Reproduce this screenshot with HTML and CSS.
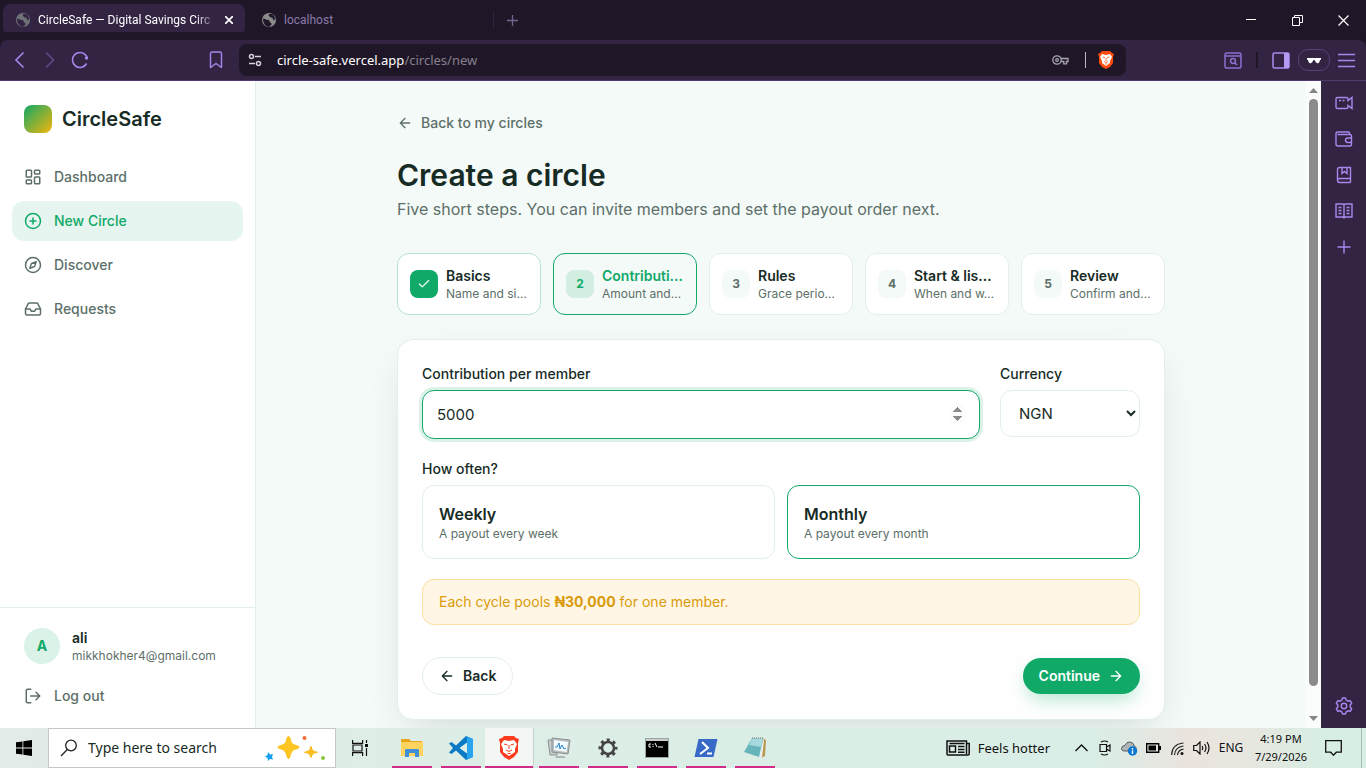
FILE: index.html
```html
<!DOCTYPE html>
<html lang="en">
<head>
    <meta charset="UTF-8">
    <meta name="viewport" content="width=device-width, initial-scale=1.0">
    <title>CircleSafe — Digital Savings Circles</title>
    <link rel="stylesheet" href="styles.css">
</head>
<body>
    <!-- Browser tabs -->
    <header class="tabs">
        <div class="tab active">
            <svg class="globe" width="14" height="14" viewBox="0 0 14 14"><circle cx="7" cy="7" r="7" fill="#6f7377"/><path d="M1 6c2-1 3 1 5 1s1 2 3 3-1 3-2 4C3 13 1 10 1 6zM7 1c-1 2 1 2 1 3s3 0 3 2 2 1 2 0-1-4-3-5z" fill="#332444"/></svg>
            <span class="tab-title">CircleSafe — Digital Savings Circ</span>
            <button class="tab-close" aria-label="Close tab"><svg width="8" height="8" viewBox="0 0 8 8"><path d="M0 0l8 8M8 0L0 8" stroke="#fff" stroke-width="1.700"/></svg></button>
        </div>
        <div class="tab">
            <svg class="globe" width="14" height="14" viewBox="0 0 14 14"><circle cx="7" cy="7" r="7" fill="#8b8b8b"/><path d="M1 6c2-1 3 1 5 1s1 2 3 3-1 3-2 4C3 13 1 10 1 6zM7 1c-1 2 1 2 1 3s3 0 3 2 2 1 2 0-1-4-3-5z" fill="#1f1728"/></svg>
            <span class="tab-title">localhost</span>
        </div>
        <i class="tab-line"></i>
        <button class="new-tab" aria-label="New tab"><svg width="11" height="11" viewBox="0 0 11 11"><path d="M5.500 0v11M0 5.500h11" stroke="#75648f" stroke-width="1.300"/></svg></button>
        <div class="window-buttons">
            <button aria-label="Minimize"><svg width="10" height="10"><path d="M0 4.500h10" stroke="#fff"/></svg></button>
            <button aria-label="Restore"><svg width="11" height="11" fill="none" stroke="#fff"><path d="M.5 2.500h7v8h-7zM2.500 2.500v-2h8v7h-3"/></svg></button>
            <button aria-label="Close"><svg width="11" height="11" stroke="#fff" stroke-width="1.200"><path d="M.5.5l10 10M10.500.5l-10 10"/></svg></button>
        </div>
    </header>

    <!-- Toolbar -->
    <div class="toolbar">
        <div class="nav-buttons">
            <button aria-label="Back"><svg width="20" height="20" viewBox="0 0 20 20" fill="none" stroke="#a887ec" stroke-width="1.600"><path d="M13.500 2.500L6 10l7.500 7.500"/></svg></button>
            <button aria-label="Forward"><svg width="20" height="20" viewBox="0 0 20 20" fill="none" stroke="#634985" stroke-width="1.600"><path d="M6 2.500L13.500 10 6 17.500"/></svg></button>
            <button aria-label="Reload"><svg width="20" height="20" viewBox="0 0 20 20" fill="none" stroke="#a887ec" stroke-width="1.600"><path d="M16.600 13.500A7.500 7.500 0 1 1 16 5.500l1 2"/><circle cx="16.500" cy="8" r="1.700" fill="#a887ec" stroke="none"/></svg></button>
        </div>
        <button class="bookmark" aria-label="Bookmark"><svg width="14" height="18" viewBox="0 0 14 18" fill="none" stroke="#a887ec" stroke-width="1.400"><path d="M1.500 2.500q0-1.500 1.500-1.500h8q1.500 0 1.500 1.500v14L7 12.500l-5.500 4z" stroke-linejoin="round"/></svg></button>
        <div class="address">
            <svg width="14" height="14" viewBox="0 0 14 14" fill="none" stroke="#d5d1da" stroke-width="1.500"><circle cx="3.500" cy="3.500" r="2"/><circle cx="10.500" cy="10.500" r="2"/><path d="M7 3.500h6M1 10.500h6"/></svg>
            <span class="url">circle-safe.vercel.app<span>/circles/new</span></span>
            <svg width="17" height="12" viewBox="0 0 17 12" fill="none" stroke="#aaa6af" stroke-width="1.300"><circle cx="5" cy="6" r="4.200"/><circle cx="5" cy="6" r="1.300"/><path d="M9 4.500h7v3h-1.500v2.300h-2.700V7.500H9"/></svg>
            <i class="address-line"></i>
            <svg width="16" height="18" viewBox="0 0 16 18"><path d="M4 0h8l2 2 2 1-1 3 0 6-3 4-4 2-4-2-3-4V6L0 3l2-1z" fill="#ff4a0d"/><path d="M4 3l4 1 4-1 2 3-2 4 0 2-4 3-4-3V10L2 6z" fill="#fff"/><path d="M4.500 6l2.500.8M11.500 6L9 6.800M8 7v3M6 10.500l2 1 2-1M7 13h2" stroke="#ff4a0d" stroke-width=".8" fill="none"/></svg>
        </div>
        <div class="tool-icons">
            <svg width="18" height="17" viewBox="0 0 18 17" fill="none" stroke="#8f6fd0" stroke-width="1.500"><rect x="1" y="1" width="16" height="15" rx="1.500"/><path d="M1 4h16M11 11l2 2"/><circle cx="9" cy="9" r="2.400"/></svg>
            <i class="tool-line"></i>
            <svg width="18" height="17" viewBox="0 0 18 17"><rect x="1" y="1" width="16" height="15" rx="1.500" fill="none" stroke="#a98bee" stroke-width="1.500"/><path d="M12 1h5v15h-5z" fill="#b59bf5"/></svg>
            <button class="private" aria-label="Private profile"><svg width="14" height="7" viewBox="0 0 16 8"><path d="M0 1h16v2h-1l-1 3q-1 1.500-2.500 1T9 4L8 3 7 4Q6 6.500 4.500 7T2 6L1 3H0z" fill="#fff"/></svg></button>
            <button class="menu" aria-label="Menu"><svg width="17" height="15" stroke="#a887ec" stroke-width="1.600"><path d="M0 1.500h17M0 7.500h17M0 13.500h17"/></svg></button>
        </div>
    </div>

    <div class="window">
        <aside class="sidebar">
            <a href="#" class="brand"><span class="logo"></span>CircleSafe</a>
            <nav>
                <a href="#"><svg class="icon" viewBox="0 0 24 24"><rect x="3" y="3" width="7" height="9" rx="1"/><rect x="14" y="3" width="7" height="5" rx="1"/><rect x="14" y="12" width="7" height="9" rx="1"/><rect x="3" y="16" width="7" height="5" rx="1"/></svg>Dashboard</a>
                <a href="#" class="current"><svg class="icon" viewBox="0 0 24 24"><circle cx="12" cy="12" r="10"/><path d="M8 12h8M12 8v8"/></svg>New Circle</a>
                <a href="#"><svg class="icon" viewBox="0 0 24 24"><circle cx="12" cy="12" r="10"/><path d="M16.240 7.760l-1.804 5.411a2 2 0 0 1-1.265 1.265L7.760 16.240l1.804-5.411a2 2 0 0 1 1.265-1.265z"/></svg>Discover</a>
                <a href="#"><svg class="icon" viewBox="0 0 24 24"><path d="M22 12h-6l-2 3h-4l-2-3H2"/><path d="M5.450 5.110L2 12v6a2 2 0 0 0 2 2h16a2 2 0 0 0 2-2v-6l-3.450-6.890A2 2 0 0 0 16.760 4H7.240a2 2 0 0 0-1.790 1.110z"/></svg>Requests</a>
            </nav>
            <div class="account">
                <div class="user">
                    <span class="avatar">A</span>
                    <div>
                        <p class="user-name">ali</p>
                        <p class="user-email">mikkhokher4@gmail.com</p>
                    </div>
                </div>
                <a href="#" class="logout"><svg class="icon" viewBox="0 0 24 24"><path d="M9 21H5a2 2 0 0 1-2-2V5a2 2 0 0 1 2-2h4M16 17l5-5-5-5M21 12H9"/></svg>Log out</a>
            </div>
        </aside>

        <main>
            <div class="content">
                <a href="#" class="back-link"><svg class="icon small" viewBox="0 0 24 24"><path d="M12 19l-7-7 7-7M19 12H5"/></svg>Back to my circles</a>
                <h1>Create a circle</h1>
                <p class="lead">Five short steps. You can invite members and set the payout order next.</p>

                <ol class="steps">
                    <li class="step done">
                        <span class="step-number"><svg class="icon check" viewBox="0 0 24 24"><path d="M20 6L9 17l-5-5"/></svg></span>
                        <div><p class="step-name">Basics</p><p class="step-info">Name and si…</p></div>
                    </li>
                    <li class="step now">
                        <span class="step-number">2</span>
                        <div><p class="step-name">Contributi…</p><p class="step-info">Amount and…</p></div>
                    </li>
                    <li class="step">
                        <span class="step-number">3</span>
                        <div><p class="step-name">Rules</p><p class="step-info">Grace perio…</p></div>
                    </li>
                    <li class="step">
                        <span class="step-number">4</span>
                        <div><p class="step-name">Start &amp; lis…</p><p class="step-info">When and w…</p></div>
                    </li>
                    <li class="step">
                        <span class="step-number">5</span>
                        <div><p class="step-name">Review</p><p class="step-info">Confirm and…</p></div>
                    </li>
                </ol>

                <form class="card">
                    <div class="amount-row">
                        <div class="field">
                            <label for="amount">Contribution per member</label>
                            <input type="number" id="amount" value="5000">
                        </div>
                        <div class="field">
                            <label for="currency">Currency</label>
                            <select id="currency"><option>NGN</option></select>
                        </div>
                    </div>
                    <p class="group-label">How often?</p>
                    <div class="options">
                        <button type="button" class="option"><strong>Weekly</strong><span>A payout every week</span></button>
                        <button type="button" class="option selected"><strong>Monthly</strong><span>A payout every month</span></button>
                    </div>
                    <p class="notice">Each cycle pools <strong>₦30,000</strong> for one member.</p>
                    <div class="actions">
                        <button type="button" class="btn btn-back"><svg class="icon small" viewBox="0 0 24 24"><path d="M12 19l-7-7 7-7M19 12H5"/></svg>Back</button>
                        <button type="button" class="btn btn-next">Continue<svg class="icon small" viewBox="0 0 24 24"><path d="M5 12h14M12 5l7 7-7 7"/></svg></button>
                    </div>
                </form>
            </div>
        </main>

        <div class="scrollbar">
            <svg width="9" height="5"><path d="M0 5L4.500 0 9 5z" fill="#858585"/></svg>
            <div class="track"><div class="thumb"></div></div>
            <svg width="9" height="5"><path d="M0 0h9L4.500 5z" fill="#858585"/></svg>
        </div>

        <div class="rail">
            <button aria-label="Talk"><svg width="18" height="18" viewBox="0 0 18 18"><path d="M2.500 3.500h9q1.500 0 1.500 1.500v1.500l4-3v11l-4-3V13q0 1.500-1.500 1.500h-9Q1 14.500 1 13V5q0-1.500 1.500-1.500zM4 6.500h2M7.500 6.500h2"/></svg></button>
            <button aria-label="Wallet"><svg width="18" height="18" viewBox="0 0 18 18"><path d="M14.500 4.500V3q0-1-1-1h-11Q1 2 1 3.500V14q0 2 2 2h12q1.500 0 1.500-1.500V6q0-1.500-1.500-1.500H2.500M16.500 8H13q-2.500 0-2.500 2.200t2.500 2.300h3.500z"/></svg></button>
            <button aria-label="Bookmarks"><svg width="18" height="18" viewBox="0 0 18 18"><path d="M15.500 12.500v-11h-11Q2.500 1.500 2.500 3.500V14q0 2.500 2 2.500h11M2.500 14q0-1.500 2-1.500h11v4M7 1.500v6l2.500-2 2.500 2v-6"/></svg></button>
            <button aria-label="Reading list"><svg width="18" height="18" viewBox="0 0 18 18"><path d="M1 2h7l1 1 1-1h7v13h-7l-1 1-1-1H1zM9 3v13M3.500 5.500h3M3.500 8.500h3M3.500 11.500h3M11.500 5.500h3M11.500 8.500h3M11.500 11.500h3"/></svg></button>
            <button aria-label="Add"><svg width="18" height="18" viewBox="0 0 18 18"><path d="M9 2.500v13M2.500 9h13"/></svg></button>
            <button class="rail-settings" aria-label="Settings"><svg width="18" height="18" viewBox="0 0 18 18"><path d="M7.500 1h3l.7 2.200 1.800 1 2.200-.5 1.500 2.600L15.200 8v2l1.500 1.700-1.500 2.600-2.200-.5-1.800 1-.7 2.200h-3l-.7-2.200-1.800-1-2.200.5-1.500-2.600L2.800 10V8L1.300 6.300l1.500-2.600 2.200.5 1.800-1z" stroke-linejoin="round"/><circle cx="9" cy="9" r="2.700"/></svg></button>
        </div>
    </div>

    <!-- Taskbar -->
    <footer class="taskbar">
        <button class="start" aria-label="Start"><svg width="16" height="16" viewBox="0 0 16 16"><path d="M0 2.300L6.500 1.400v6.200H0zM7.300 1.300L16 0v7.600H7.300zM0 8.400h6.500v6.200L0 13.700zM7.300 8.400H16V16l-8.700-1.300z"/></svg></button>
        <div class="search">
            <svg width="18" height="18" viewBox="0 0 18 18" fill="none" stroke="#222" stroke-width="1.300"><circle cx="11" cy="6.500" r="5.300"/><path d="M7.300 10.500L1 17"/></svg>
            <input type="text" value="Type here to search" aria-label="Type here to search">
            <svg width="62" height="26" viewBox="0 0 62 26"><path d="M24.500 1q2 0 3 6 1 2 6 3.500 4 1.500 0 3.500-5 1-6 4-1.500 6-3 6t-3-6q-1-3-6-4-4-2 0-3.500 5-1.500 6-3.500 1-6 3-6z" fill="#fcc521"/><path d="M47 11q1 0 1.500 3.500.5 1.500 4 2t0 1.500q-3.500.5-4 2Q48 23 47 23t-1.500-3q-.5-1.500-4-2t0-1.500 4-2Q46 11 47 11z" fill="#f8bd21"/><path d="M4 17l2 2.500L9 19l-1 3 1 2.500-3-.5-2 2-.5-3L1 21.500 3.500 20z" fill="#16a0ed"/><circle cx="40.500" cy="3" r="2" fill="#ee6b35"/><circle cx="59" cy="23" r="2" fill="#87c540"/></svg>
        </div>
        <button class="start" aria-label="Task view"><svg width="17" height="16" viewBox="0 0 17 16" fill="none" stroke="#111" stroke-width="1.200"><path d="M.6 0v3.400h10V0M.6 16v-3.400h10V16M1 5h9v6H1zM14.500 0v3M14.500 8v8"/><path d="M13 4h3v3h-3z" fill="#111" stroke="none"/></svg></button>
        <div class="apps">
            <button class="app" aria-label="File Explorer"><svg width="24" height="24" viewBox="0 0 24 24"><path d="M1 4q0-1 1-1h7l2 2h11v15H1z" fill="#e8a41b"/><path d="M1 6h22v14H1z" fill="#ffd45e"/><path d="M5 21v-7q0-1 1-1h12q1 0 1 1v7h-4v-4H9v4z" fill="#3f8fd9"/></svg></button>
            <button class="app" aria-label="Visual Studio Code"><svg width="24" height="24" viewBox="0 0 24 24"><path d="M17 0l7 3v18l-7 3L7 14.500 2.500 18 0 16.500 4 12 0 7.500 2.500 6 7 9.500zm1 6.500L10.500 12l7.500 5.500z" fill="#0a7ac5" fill-rule="evenodd"/><path d="M17 0l7 3v18l-7 3q1-.5 1-2V2q0-1.500-1-2z" fill="#2aa4ee"/></svg></button>
            <button class="app open" aria-label="Brave"><svg width="22" height="24" viewBox="0 0 22 24"><path d="M6 0h10l2 2 3 1-1 4 0 9-4 5-5 3-5-3-4-5V7L1 3l3-1z" fill="#fb3b1d"/><path d="M6 4l5 1 5-1 3 4-2 5 0 3-6 4-6-4v-3L3 8z" fill="#fff"/><path d="M6 8l3.500 1M16 8l-3.500 1M11 9v4M8 14l3 1.500 3-1.500M9.500 17.500h3" stroke="#fb3b1d" fill="none"/></svg></button>
            <button class="app" aria-label="Performance"><svg width="24" height="22" viewBox="0 0 24 22"><path d="M1 3h9v15H3z" fill="#c6cbcc" stroke="#8c9293"/><path d="M5 1l18 2-2 14-16-2z" fill="#b7bdbe" stroke="#8c9293"/><path d="M7 3l14 2-1.500 10L7 13z" fill="#f4fbff"/><path d="M8 10l2 0 2-4 1 6 2-4 2 4 2-1" stroke="#2584c6" fill="none"/><path d="M9 19l8 0 2 2H8z" fill="#aeb4b5"/></svg></button>
            <button class="app" aria-label="Settings"><svg width="20" height="20" viewBox="0 0 20 20" fill="none" stroke="#444"><circle cx="10" cy="10" r="6" stroke-width="2.500"/><circle cx="10" cy="10" r="8" stroke-width="3" stroke-dasharray="3 3.283" stroke-dashoffset="1.500"/></svg></button>
            <button class="app" aria-label="Command Prompt"><svg width="24" height="20" viewBox="0 0 24 20"><path d="M.5.5h23v19H.5z" stroke="#9ea3a4"/><path d="M1 1h22v2H1z" fill="#c9cdce"/><path d="M6 6H4v3h2M8 6v1M8 8v1M10 5l2 4M13 9h5" stroke="#fff" fill="none"/></svg></button>
            <button class="app" aria-label="PowerShell"><svg width="24" height="20" viewBox="0 0 24 20"><path d="M4.500 1h19l-4 18h-19z" fill="#3969c7"/><path d="M8 4l6 6-8 6M13 15.500h5" fill="none" stroke="#fff" stroke-width="2"/></svg></button>
            <button class="app" aria-label="Notepad"><svg width="24" height="22" viewBox="0 0 24 22"><path d="M19 1l4 2-1 16-4 2z" fill="#b9974f"/><path d="M20 2l1 1-2 18-3-1z" fill="#e9eeee"/><path d="M9 1l11 1-4 18L1 15z" fill="#66b5bd"/><path d="M9 1l11 1-2 8-12-2z" fill="#a5d9dd"/><path d="M9 1h11" stroke="#666" stroke-dasharray="1 1"/></svg></button>
        </div>
        <div class="news">
            <svg width="24" height="16" viewBox="0 0 24 16" fill="none" stroke="#111" stroke-width="1.500"><path d="M20.500 13V1H1v13q0 1 1 1h20q1.200 0 1.200-1V3.500h-2.700V14"/><path d="M3.500 6h6v6h-6zM3.500 3.500h15M12 6.500h6.500M12 9.500h6.500M12 12.200h6.500"/></svg>
            <span>Feels hotter</span>
        </div>
        <div class="tray">
            <button aria-label="Hidden icons"><svg width="13" height="8" fill="none" stroke="#111" stroke-width="1.300"><path d="M.5 7l6-6 6 6"/></svg></button>
            <button aria-label="Camera"><svg width="12" height="16" viewBox="0 0 12 16" fill="none" stroke="#111" stroke-width="1.200"><path d="M1 4.500h6.500v7H1zM7.500 7L11 5v6L7.500 9M2 2q3.500-2 7 0M2 14q3.500 2 7 0"/></svg></button>
            <button aria-label="Cloud sync"><svg width="17" height="16" viewBox="0 0 17 16"><path d="M4 11Q0 11 .7 8 1 5.500 4 5.500 5.500 1.500 9 2t4.500 4Q16 7 15 11z" fill="#b1b5b7" stroke="#555b5d"/><circle cx="11.500" cy="11" r="4.700" fill="#0878d4"/><path d="M11.500 8v1.500M11.500 10.300V14" stroke="#fff" stroke-width="1.400"/></svg></button>
            <button aria-label="Battery"><svg width="15" height="10" viewBox="0 0 15 10"><path d="M.7.7h12v8.600h-12z" fill="none" stroke="#000" stroke-width="1.400"/><path d="M2.500 2.500h7.500v5H2.500zM13 3h2v4h-2z"/></svg></button>
            <button aria-label="Wi-Fi"><svg width="13" height="13" viewBox="0 0 13 13" fill="none" stroke="#222" stroke-width="1.200"><path d="M.6 13Q1 2 12.500 1M3.500 13Q4 5 12.500 4M6.500 13Q7 8 12.500 7.200"/><circle cx="11" cy="11.500" r="1.500" fill="#111" stroke="none"/></svg></button>
            <button aria-label="Volume"><svg width="17" height="14" viewBox="0 0 17 14" fill="none" stroke="#111" stroke-width="1.200"><path d="M.7 4.500h2.800L7 1v12L3.500 9.500H.7zM9 5q1.500 2 0 4M11.500 3q3 4 0 8M14 1q4 6 0 12"/></svg></button>
            <span class="lang">ENG</span>
            <div class="clock"><span>4:19 PM</span><span>7/29/2026</span></div>
            <button class="notify" aria-label="Notifications"><svg width="17" height="16" viewBox="0 0 17 16" fill="none" stroke="#111" stroke-width="1.300"><path d="M.7.7h15.600v11.500h-5l-2.800 3-2.800-3h-5z"/></svg></button>
            <i class="desktop-edge"></i>
        </div>
    </footer>
</body>
</html>
```

FILE: styles.css
```css
* {
    box-sizing: border-box;
}

body {
    margin: 0;
    height: 100vh;
    display: flex;
    flex-direction: column;
    overflow: hidden;
    font-family: Inter, sans-serif;
    font-size: 14px;
    line-height: 20px;
    color: #172b25;
}

p, h1, ol {
    margin: 0;
    padding: 0;
}

a {
    color: inherit;
    text-decoration: none;
}

button {
    border: none;
    padding: 0;
    background: none;
    color: inherit;
    font: inherit;
}

svg {
    display: block;
    flex: none;
}

.icon {
    width: 18px;
    height: 18px;
    fill: none;
    stroke: currentColor;
    stroke-width: 2;
    stroke-linecap: round;
    stroke-linejoin: round;
}

.icon.small {
    width: 16px;
    height: 16px;
}

.icon.check {
    width: 14px;
    height: 14px;
}

/* Tabs */
.tabs {
    height: 40px;
    flex: none;
    display: flex;
    align-items: center;
    padding-left: 3px;
    background: #1f1728;
    font-family: Roboto, sans-serif;
    font-size: 12px;
}

.tab {
    width: 242px;
    height: 32px;
    display: flex;
    align-items: center;
    gap: 8px;
    padding: 0 12px 0 13px;
    color: #8b7aa8;
}

.tab.active {
    border-radius: 8px;
    background: #332444;
    color: #fff;
}

.tab + .tab {
    margin-left: 4px;
}

.tab-title {
    flex: 1;
    white-space: nowrap;
}

.tab.active .tab-title {
    mask-image: linear-gradient(to right, #000 88%, transparent);
}

.tab-line {
    width: 1px;
    height: 16px;
    margin-left: 2px;
    background: #332444;
}

.new-tab {
    margin-left: 13px;
}

.window-buttons {
    margin-left: auto;
    display: flex;
}

.window-buttons button {
    width: 46px;
    height: 40px;
    display: grid;
    place-items: center;
}

/* Toolbar */
.toolbar {
    height: 41px;
    flex: none;
    display: flex;
    align-items: center;
    padding-right: 11px;
    border-bottom: 1px solid #513a70;
    border-radius: 8px 8px 0 0;
    background: #332444;
    box-shadow: 0 -8px 0 #1f1728;
    font-family: "Noto Sans", sans-serif;
}

.nav-buttons {
    display: flex;
    gap: 10px;
    padding-left: 10px;
}

.bookmark {
    margin-left: 119px;
}

.address {
    flex: 1;
    height: 32px;
    display: flex;
    align-items: center;
    gap: 12px;
    margin: 0 98px 0 16px;
    padding: 0 12px 0 9px;
    border-radius: 8px;
    background: #1f1728;
    font-size: 13px;
}

.url {
    flex: 1;
    margin-left: 3px;
    color: #fff;
}

.url span {
    color: #85808b;
}

.address-line {
    width: 1px;
    height: 16px;
    margin-left: 4px;
    background: #bab6be;
}

.tool-icons {
    display: flex;
    align-items: center;
    gap: 8px;
}

.tool-line {
    width: 2px;
    height: 16px;
    margin: 0 6px;
    background: #1f1728;
}

.private {
    width: 32px;
    height: 22px;
    display: grid;
    place-items: center;
    border: 1px solid #594179;
    border-radius: 10px;
}

/* Page area */
.window {
    flex: 1;
    min-height: 0;
    display: flex;
    background: #f4faf8;
}

.sidebar {
    width: 256px;
    flex: none;
    display: flex;
    flex-direction: column;
    border-right: 1px solid #e3efeb;
    background: #fff;
    color: #5c6f69;
    font-weight: 500;
}

.brand {
    display: flex;
    align-items: center;
    gap: 10px;
    padding: 24px;
    color: #172b25;
    font-size: 20px;
    font-weight: 600;
    line-height: 28px;
}

.logo {
    width: 28px;
    height: 28px;
    border-radius: 8px;
    background: linear-gradient(135deg, #10a968, #f5b50a);
}

.sidebar nav {
    display: grid;
    gap: 4px;
    padding: 0 12px;
}

.sidebar nav a,
.logout {
    display: flex;
    align-items: center;
    gap: 12px;
    padding: 10px 12px;
    border-radius: 12px;
}

.sidebar nav .current {
    background: #e7f5f0;
    color: #10a968;
}

.account {
    margin-top: auto;
    padding: 12px;
    border-top: 1px solid #e3efeb;
}

.user {
    display: flex;
    align-items: center;
    gap: 12px;
    padding: 8px 12px;
}

.user > div {
    min-width: 0;
}

.avatar {
    width: 36px;
    height: 36px;
    display: grid;
    place-items: center;
    border-radius: 50%;
    background: #dbf2e8;
    color: #10a968;
    font-weight: 700;
}

.user-name {
    color: #172b25;
    font-weight: 600;
}

.user-email {
    font-size: 12px;
    font-weight: 400;
    line-height: 16px;
}

.logout {
    margin-top: 4px;
}

main {
    flex: 1;
    min-width: 0;
    overflow: hidden;
}

.content {
    max-width: 768px;
    margin: 0 auto;
    padding: 32px 0;
}

.back-link {
    display: flex;
    align-items: center;
    gap: 8px;
    color: #5c6f69;
    font-weight: 500;
}

h1 {
    margin-top: 24px;
    font-size: 30px;
    font-weight: 600;
    line-height: 36px;
}

.lead {
    margin-top: 4px;
    color: #5c6f69;
    font-size: 16px;
    line-height: 24px;
}

.steps {
    display: grid;
    grid-template-columns: repeat(5, 1fr);
    gap: 12px;
    margin: 32px 0 24px;
    list-style: none;
}

.step {
    display: flex;
    align-items: center;
    gap: 8px;
    padding: 12px;
    border: 1px solid #e3efeb;
    border-radius: 12px;
    background: #fff;
    white-space: nowrap;
}

.step-number {
    width: 28px;
    height: 28px;
    flex: none;
    display: grid;
    place-items: center;
    border-radius: 8px;
    background: #f4faf8;
    color: #5c6f69;
    font-size: 12px;
    font-weight: 700;
}

.step-name {
    font-weight: 600;
}

.step-info {
    color: #5c6f69;
    font-size: 12px;
    line-height: 16px;
}

.step.done {
    border-color: #b5e3cf;
}

.step.done .step-number {
    background: #10a968;
    color: #fff;
}

.step.now {
    border-color: #10a968;
    background: #f4faf8;
}

.step.now .step-number {
    background: #d2eee0;
    color: #10a968;
}

.step.now .step-name {
    color: #10a968;
}

/* Form */
.card {
    padding: 24px;
    border: 1px solid #e3efeb;
    border-radius: 16px;
    background: #fff;
    box-shadow: 0 16px 40px -12px rgba(20, 43, 36, 0.16);
}

.amount-row {
    display: grid;
    grid-template-columns: 1fr 140px;
    align-items: start;
    gap: 20px;
}

.field {
    display: grid;
    gap: 6px;
}

label,
.group-label {
    font-weight: 500;
}

input,
select {
    width: 100%;
    border: none;
    background: #fff;
    color: #172b25;
    font: inherit;
    font-size: 15px;
}

.field input,
.field select {
    height: 47px;
    padding: 0 14px;
    border: 1px solid #e3efeb;
    border-radius: 12px;
}

.field input {
    height: 49px;
    border-color: #10a968;
    outline: none;
    box-shadow: 0 0 0 3px #dbf2e8;
}

.field input::-webkit-inner-spin-button {
    opacity: 1;
}

.group-label {
    margin: 20px 0 6px;
}

.options {
    display: grid;
    grid-template-columns: 1fr 1fr;
    gap: 12px;
}

.option {
    display: grid;
    padding: 16px;
    border: 1px solid #e3efeb;
    border-radius: 12px;
    text-align: left;
}

.option.selected {
    border-color: #10a968;
}

.option strong {
    font-size: 16px;
    font-weight: 600;
    line-height: 24px;
}

.option span {
    color: #5c6f69;
    font-size: 12px;
    line-height: 16px;
}

.notice {
    margin: 20px 0 32px;
    padding: 12px 16px;
    border: 1px solid #fbe0a0;
    border-radius: 12px;
    background: #fff6e5;
    color: #d99b0b;
}

.actions {
    display: flex;
    align-items: center;
    justify-content: space-between;
}

.btn {
    height: 36px;
    display: flex;
    align-items: center;
    gap: 8px;
    padding: 0 16px;
    border-radius: 20px;
    font-weight: 600;
}

.btn-back {
    height: 38px;
    border: 1px solid #e3efeb;
}

.btn-next {
    background: #10a968;
    box-shadow: 0 8px 20px -4px rgba(16, 169, 104, 0.35);
    color: #fff;
}

/* Scrollbar and side rail */
.scrollbar {
    width: 15px;
    display: flex;
    flex-direction: column;
    align-items: center;
    gap: 6px;
    padding: 7px 0;
    background: #fbfcfc;
}

.track {
    flex: 1;
}

.thumb {
    width: 9px;
    height: 96%;
    border-radius: 5px;
    background: #8b8b8b;
}

.rail {
    width: 45px;
    flex: none;
    display: flex;
    flex-direction: column;
    align-items: center;
    gap: 18px;
    padding: 13px 0;
    background: #332444;
}

.rail svg {
    fill: none;
    stroke: #a887ec;
    stroke-width: 1.4;
}

.rail-settings {
    margin-top: auto;
}

/* Taskbar */
.taskbar {
    height: 40px;
    flex: none;
    display: flex;
    align-items: stretch;
    background: linear-gradient(to right, #e2ebe7 0%, #dceee5 40%, #d9eee6 80%, #ebe3de 87%, #e5e7df 92%, #d7eee3 97%);
    color: #111;
    font-family: "Noto Sans", sans-serif;
}

.start {
    width: 48px;
    display: grid;
    place-items: center;
}

.search {
    width: 288px;
    display: flex;
    align-items: center;
    gap: 10px;
    padding: 0 9px 0 11px;
    border: 1px solid #c3c7c5;
    background: #fff;
}

.search input {
    flex: 1;
    min-width: 0;
    padding: 0;
    font-size: 14px;
}

.apps {
    display: flex;
    padding-left: 3px;
}

.app {
    width: 49px;
    display: grid;
    place-items: center;
    background: linear-gradient(#cf2b88, #cf2b88) center bottom / 40px 2px no-repeat;
}

.app.open {
    border-right: 1px solid #c5d3cc;
    background: linear-gradient(#cf2b88, #cf2b88) center bottom / 100% 2px no-repeat, #f2f7f5;
}

.news {
    display: flex;
    align-items: center;
    gap: 8px;
    margin-left: auto;
    margin-right: 19px;
    font-size: 13px;
}

.tray {
    display: flex;
    align-items: stretch;
    font-size: 12px;
}

.tray button {
    width: 24px;
    display: grid;
    place-items: center;
}

.lang {
    width: 36px;
    align-self: center;
    text-align: center;
}

.clock {
    width: 64px;
    display: grid;
    align-content: center;
    text-align: center;
    font-size: 11px;
    line-height: 18px;
}

.tray .notify {
    width: 40px;
}

.desktop-edge {
    width: 5px;
    margin-left: 8px;
    border-left: 1px solid #a9bab2;
}
```
